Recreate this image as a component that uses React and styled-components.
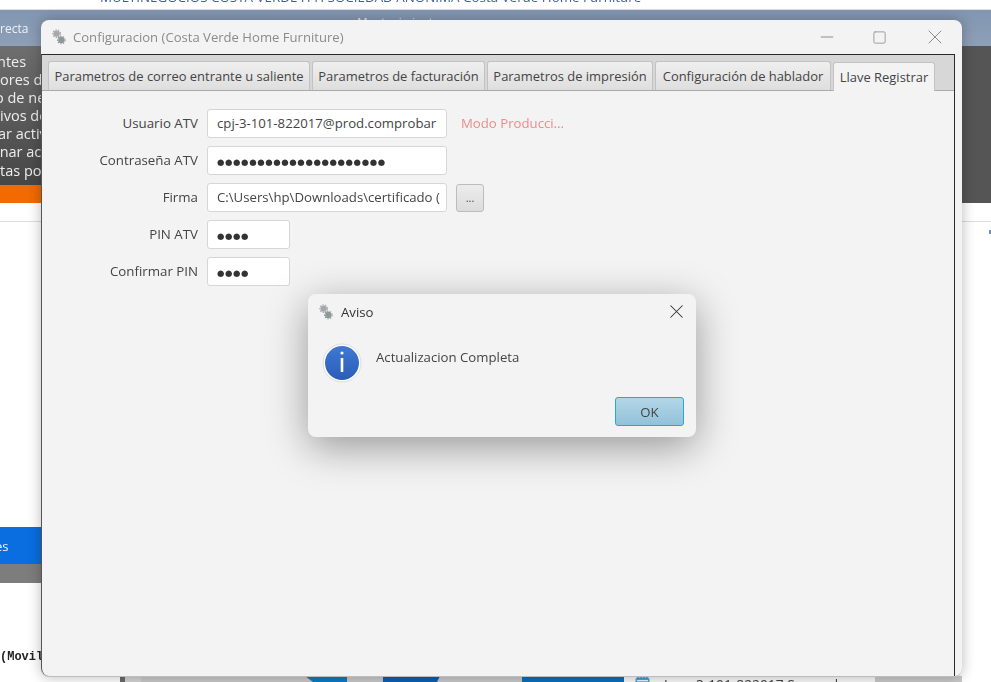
import React from 'react';
import styled, { createGlobalStyle } from 'styled-components';
import { Minus, Square, X } from 'lucide-react';

const GlobalStyle = createGlobalStyle`
  html, body {
    margin: 0;
    padding: 0;
    height: 100%;
    overflow: hidden;
    background: #fff;
  }
  * { box-sizing: border-box; }
`;

const UI_FONT = `"Open Sans", "Noto Sans", "Liberation Sans", sans-serif`;

const Desktop = styled.div`
  position: relative;
  width: 991px;
  height: 682px;
  overflow: hidden;
  font-family: ${UI_FONT};
  filter: blur(0.4px);
`;

/* the application behind the windows */
const TopStrip = styled.div`
  height: 10px;
  background: #fff;
  border-bottom: 1px solid #dcdfe3;
  padding-left: 100px;
  font-size: 13.4px;
  line-height: 14px;
  color: #3f5f9c;
  white-space: nowrap;
  overflow: hidden;
  > span { display: block; margin-top: -10px; }
`;

const MenuBar = styled.div`
  height: 36px;
  background: linear-gradient(#8296b1, #8ea0b8);
  color: #eef1f5;
  font-size: 12px;
  position: relative;
  display: flex;
  align-items: flex-end;
  padding-bottom: 9px;
`;

const MenuItem = styled.span`
  margin-left: ${p => p.$left || 0}px;
  transform: translateY(${p => p.$shift || 0}px);
  font-size: ${p => p.$size || 12}px;
`;

const DarkBand = styled.div`
  height: 139px;
  background: linear-gradient(#6e6e6e, #464646) 0 0 / 41px 100% no-repeat, #555;
  color: #eee;
  font-size: 14.5px;
  line-height: 18.1px;
  padding-top: 7px;
  white-space: nowrap;
  overflow: hidden;
`;

const BandLine = styled.div`
  width: 41px;
  > span { display: block; margin-left: ${p => p.$shift || 0}px; }
`;

const Orange = styled.div`
  height: 18px;
  background: linear-gradient(#f26a00, #f26a00) 0 0 / 41px 100% no-repeat, #555;
`;

const Sheet = styled.div`
  height: 380px;
  padding-top: 18px;
  background: #fff;
`;

const Rule = styled.div`
  height: 1px;
  background: #dddddd;
`;

const ScrollMark = styled.div`
  width: 2px;
  height: 4px;
  margin: 8px 0 0 989px;
  background: #6a8fc0;
`;

const SideButton = styled.div`
  width: 41px;
  height: 37px;
  margin-top: 293px;
  background: #0a6ee0;
  color: #f3f7fd;
  font-size: 13px;
  line-height: 38px;
  text-indent: -5px;
  overflow: hidden;
`;

const SideGrey = styled.div`
  width: 41px;
  height: 19px;
  background: #7d7d7d;
`;

const Lower = styled.div`
  height: 93px;
  background: #fff;
  padding-top: 67px;
  font-family: "Liberation Mono", monospace;
  font-weight: 700;
  font-size: 12px;
  line-height: 14px;
  color: #222;
`;

const Taskbar = styled.div`
  height: 6px;
  display: flex;
  background: #c9c9c9;
`;

const TaskPiece = styled.div`
  width: ${p => p.$w}px;
  background: ${p => p.$bg || '#c9c9c9'};
  clip-path: ${p => p.$clip || 'none'};
`;

const TaskEnd = styled.div`
  flex: 1;
  background: #fff;
`;

/* windows */
const Window = styled.div`
  position: absolute;
  left: 41px;
  top: 20px;
  width: 921px;
  height: 657px;
  background: #f3f3f3;
  border-radius: 8px;
  border-bottom: 1px solid #bdbdbd;
  box-shadow: 0 0 14px rgba(0, 0, 0, 0.28);
  display: flex;
  flex-direction: column;
`;

const TitleBar = styled.div`
  height: 34px;
  display: flex;
  align-items: center;
  padding-left: 11px;
  color: #8b8b8b;
  font-size: 13.1px;
`;

const TitleText = styled.span`
  margin-left: 7px;
  flex: 1;
`;

const WinControl = styled.div`
  width: ${p => p.$w || 55}px;
  display: flex;
  justify-content: center;
  color: #8d8d8d;
`;

const Scene = styled.div`
  flex: 1;
  margin-right: 7px;
  border-top: 1px solid #2a2a2a;
  border-right: 1px solid #2a2a2a;
  border-left: 1px solid #555;
  border-bottom-left-radius: 8px;
  background: #f3f3f3;
  display: flex;
  flex-direction: column;
`;

const TabHeader = styled.div`
  height: 36px;
  background: #d7d7d7;
  border-bottom: 1px solid #aaaaaa;
  display: flex;
  align-items: flex-end;
  gap: 2px;
  padding-left: 6px;
`;

const Tab = styled.div`
  width: ${p => p.$w}px;
  height: 29px;
  margin-bottom: ${p => (p.$active ? -1 : 0)}px;
  padding-bottom: ${p => (p.$active ? 1 : 0)}px;
  border: 1px solid #c2c2c2;
  border-bottom: none;
  border-radius: 3px 3px 0 0;
  background: ${p => (p.$active ? '#f3f3f3' : 'linear-gradient(#efefef, #dedede)')};
  color: #444;
  font-size: 12.95px;
  display: flex;
  align-items: center;
  justify-content: center;
  white-space: nowrap;
`;

const Form = styled.div`
  display: grid;
  grid-template-columns: 156px 249px 37px 1fr;
  grid-auto-rows: 29px;
  row-gap: 8px;
  padding-top: 18px;
  align-items: center;
`;

const Label = styled.div`
  grid-column: 1;
  text-align: right;
  padding-bottom: 2px;
  font-size: 13.3px;
  color: #444;
`;

const Field = styled.div`
  grid-column: 2;
  width: ${p => (p.$short ? '83px' : '240px')};
  height: 29px;
  margin-left: 9px;
  background: #fff;
  border: 1px solid #d6d6d6;
  border-radius: 3px;
  padding: 0 9px;
  font-size: 13.2px;
  line-height: 27px;
  color: #444;
  white-space: nowrap;
  overflow: hidden;
`;

const Dots = styled.span`
  font-family: "DejaVu Sans", sans-serif;
  font-size: 8.5px;
  letter-spacing: 0.62px;
  color: #333;
`;

const Browse = styled.div`
  grid-column: 3;
  margin-left: 9px;
  width: 28px;
  height: 28px;
  border: 1px solid #bcbcbc;
  border-radius: 3px;
  background: linear-gradient(#ececec, #dcdcdc);
  color: #444;
  font-size: 11px;
  display: flex;
  align-items: center;
  justify-content: center;
`;

const Mode = styled.div`
  grid-column: 3 / span 2;
  margin-left: 14px;
  padding-bottom: 2px;
  font-size: 13.2px;
  color: #f08a8a;
  white-space: nowrap;
`;

const Dialog = styled.div`
  position: absolute;
  left: 308px;
  top: 294px;
  width: 388px;
  height: 143px;
  background: #f3f3f3;
  border-radius: 8px;
  box-shadow: 0 10px 40px rgba(0, 0, 0, 0.38);
  display: flex;
  flex-direction: column;
`;

const DialogTitle = styled.div`
  height: 35px;
  display: flex;
  align-items: center;
  padding: 0 8px 0 11px;
  font-size: 13.2px;
  color: #333;
`;

const DialogName = styled.span`
  margin-left: 8px;
  flex: 1;
`;

const DialogBody = styled.div`
  display: flex;
  align-items: flex-start;
  padding-left: 14px;
  height: 68px;
`;

const IconSlot = styled.div`
  width: 40px;
  height: 40px;
  margin-top: 14px;
`;

const Message = styled.div`
  margin-left: 14px;
  padding-top: 18px;
  font-size: 13.2px;
  line-height: 20px;
  color: #444;
`;

const DialogFooter = styled.div`
  display: flex;
  justify-content: flex-end;
  padding-right: 12px;
`;

const OkButton = styled.div`
  width: 69px;
  height: 29px;
  border: 1px solid #2aa6d6;
  border-radius: 3px;
  background: linear-gradient(#b3d6e7, #92c2da);
  color: #444;
  font-size: 13.2px;
  display: flex;
  align-items: center;
  justify-content: center;
`;

const Notification = styled.div`
  position: absolute;
  left: 624px;
  top: 662px;
  width: 251px;
  height: 40px;
  background: #f9f9f9;
  border-radius: 8px;
  padding: 14px 0 0 11px;
  display: flex;
  align-items: flex-start;
  font-size: 13.8px;
  line-height: 18px;
  color: #444;
  white-space: nowrap;
`;

const NotificationText = styled.span`
  margin: 0 0 0 14px;
`;

const GearIcon = () => (
  <svg width="14" height="16" viewBox="0 0 14 16">
    <circle cx="4.6" cy="4.6" r="3.2" fill="#a3a8aa" />
    <circle cx="4.6" cy="4.6" r="3.8" fill="none" stroke="#a3a8aa" strokeWidth="1.1" strokeDasharray="1.4 1.3" />
    <circle cx="9.3" cy="11" r="3.2" fill="#8d989a" />
    <circle cx="9.3" cy="11" r="3.8" fill="none" stroke="#8d989a" strokeWidth="1.1" strokeDasharray="1.4 1.3" />
  </svg>
);

const InfoIcon = () => (
  <svg width="40" height="40" viewBox="0 0 40 40">
    <defs>
      <linearGradient id="infoFill" x1="0" y1="0" x2="0" y2="1">
        <stop offset="0" stopColor="#3f78d2" />
        <stop offset="1" stopColor="#2a5db8" />
      </linearGradient>
    </defs>
    <circle cx="20" cy="20" r="19" fill="#fff" stroke="#dcdcdc" />
    <circle cx="20" cy="20" r="17" fill="url(#infoFill)" />
    <circle cx="20" cy="10" r="1.6" fill="#fff" />
    <rect x="18.7" y="15" width="2.6" height="14" rx="0.6" fill="#fff" />
  </svg>
);

const CalendarIcon = () => (
  <svg width="15" height="14" viewBox="0 0 15 14">
    <rect x="0.5" y="1.5" width="14" height="12" rx="2" fill="#4aa3dc" />
    <path d="M3 0.5v2M6 0.5v2M9 0.5v2M12 0.5v2" stroke="#2f7fb5" strokeWidth="1" />
    <rect x="2" y="4" width="11" height="1.4" fill="#e8f4fb" />
  </svg>
);

const tabs = [
  { label: 'Parametros de correo entrante u saliente', w: 262 },
  { label: 'Parametros de facturación', w: 173 },
  { label: 'Parametros de impresión', w: 166 },
  { label: 'Configuración de hablador', w: 176 },
  { label: 'Llave Registrar', w: 102, active: true },
];

const bandLines = [
  { text: 'ntes', shift: -3 },
  { text: 'ores de', shift: 0 },
  { text: 'o de ne', shift: -5 },
  { text: 'ivos de', shift: 0 },
  { text: 'ar activ', shift: -2 },
  { text: 'inar act', shift: -4 },
  { text: 'tas por', shift: 0 },
];

const taskPieces = [
  { w: 120, bg: '#fff' },
  { w: 5, bg: '#6b6b6b' },
  { w: 16, bg: '#d4d4d4' },
  { w: 164 },
  { w: 42, bg: '#0b7cc6', clip: 'polygon(0 0, 100% 0, 100% 100%, 8px 100%)' },
  { w: 36 },
  { w: 57, bg: '#0a60b4', clip: 'polygon(0 0, 100% 0, calc(100% - 3px) 100%, 0 100%)' },
  { w: 82 },
  { w: 102, bg: '#0a6fbe' },
  { w: 338 },
];

export default function App() {
  return (
    <>
      <GlobalStyle />
      <Desktop>
        <TopStrip><span>MULTINEGOCIOS COSTA VERDE H H SOCIEDAD ANONIMA Costa Verde Home Furniture</span></TopStrip>
        <MenuBar>
          <MenuItem>recta</MenuItem>
          <MenuItem $left={329} $shift={-8} $size={11.5}>Mantenimiento</MenuItem>
        </MenuBar>
        <DarkBand>
          {bandLines.map(l => <BandLine key={l.text} $shift={l.shift}><span>{l.text}</span></BandLine>)}
        </DarkBand>
        <Orange />
        <Sheet>
          <Rule />
          <ScrollMark />
          <SideButton>es</SideButton>
          <SideGrey />
        </Sheet>
        <Lower>(Movil</Lower>
        <Taskbar>
          {taskPieces.map((t, i) => <TaskPiece key={i} $w={t.w} $bg={t.bg} $clip={t.clip} />)}
          <TaskEnd />
        </Taskbar>

        <Notification>
          <CalendarIcon />
          <NotificationText>Juan 3-101-822017 Sawood</NotificationText>
        </Notification>

        <Window>
          <TitleBar>
            <GearIcon />
            <TitleText>Configuracion (Costa Verde Home Furniture)</TitleText>
            <WinControl $w={50}><Minus size={20} strokeWidth={1.2} /></WinControl>
            <WinControl><Square size={15} strokeWidth={1.3} /></WinControl>
            <WinControl><X size={24} strokeWidth={1} /></WinControl>
          </TitleBar>
          <Scene>
            <TabHeader>
              {tabs.map(t => <Tab key={t.label} $w={t.w} $active={t.active}>{t.label}</Tab>)}
            </TabHeader>
            <Form>
              <Label>Usuario ATV</Label>
              <Field>cpj-3-101-822017@prod.comprobar</Field>
              <Mode>Modo Producci...</Mode>
              <Label>Contraseña ATV</Label>
              <Field><Dots>{'●'.repeat(21)}</Dots></Field>
              <Label>Firma</Label>
              <Field>C:\Users\hp\Downloads\certificado (</Field>
              <Browse>...</Browse>
              <Label>PIN ATV</Label>
              <Field $short><Dots>●●●●</Dots></Field>
              <Label>Confirmar PIN</Label>
              <Field $short><Dots>●●●●</Dots></Field>
            </Form>
          </Scene>
        </Window>

        <Dialog>
          <DialogTitle>
            <GearIcon />
            <DialogName>Aviso</DialogName>
            <X size={23} strokeWidth={1.1} color="#333" />
          </DialogTitle>
          <DialogBody>
            <IconSlot><InfoIcon /></IconSlot>
            <Message>Actualizacion Completa</Message>
          </DialogBody>
          <DialogFooter>
            <OkButton>OK</OkButton>
          </DialogFooter>
        </Dialog>
      </Desktop>
    </>
  );
}
